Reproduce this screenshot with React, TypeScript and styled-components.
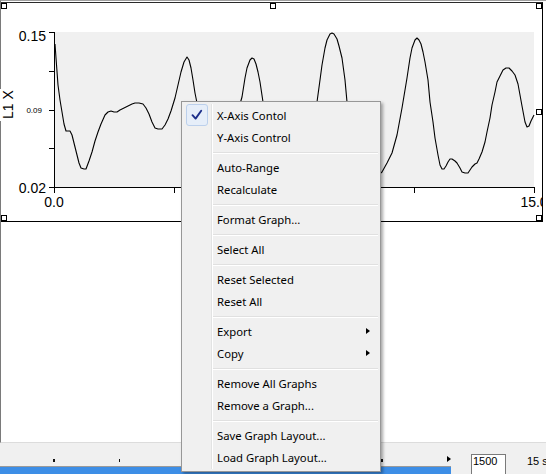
import styled, { createGlobalStyle, css } from 'styled-components';

const GlobalStyle = createGlobalStyle`
  html, body {
    margin: 0;
    padding: 0;
    background: #fff;
  }
  body {
    font-family: 'Liberation Sans', Arial, sans-serif;
  }
`;

const Window = styled.div`
  position: relative;
  width: 546px;
  height: 474px;
  overflow: hidden;
  background: #f0f0f0;
  display: flex;
  flex-direction: column;
`;

const Canvas = styled.div`
  flex: none;
  box-sizing: border-box;
  height: 443px;
  padding-top: 1px;
  background: #fff;
  border-top: 1px solid #a0a0a0;
  border-left: 1px solid #7a7a7a;
  border-bottom: 1px solid #dcdcdc;
`;

const Frame = styled.div`
  position: relative;
  box-sizing: border-box;
  width: 542px;
  height: 220px;
  border-top: 1px solid #2a2a2a;
  border-right: 1px solid #000;
  border-bottom: 1px solid #000;
`;

const Chart = styled.svg`
  display: block;
  font-family: 'Liberation Sans', Arial, sans-serif;
`;

const Handle = styled.span<{ $x: 'left' | 'center' | 'right'; $y: 'top' | 'middle' | 'bottom' }>`
  position: absolute;
  width: 6px;
  height: 6px;
  box-sizing: border-box;
  border: 1px solid #000;
  background: #fff;
  ${p => (p.$x === 'left' ? 'left: 0;' : p.$x === 'right' ? 'right: 0;' : 'left: 269px;')}
  ${p => (p.$y === 'top' ? 'top: 0;' : p.$y === 'bottom' ? 'bottom: 0;' : 'top: 106px;')}
`;

const AxisTitle = styled.div`
  position: absolute;
  left: -1px;
  top: 86px;
  width: 16px;
  height: 32px;
  background: #fff;
  display: flex;
  align-items: center;
  justify-content: center;
  writing-mode: vertical-rl;
  transform: rotate(180deg);
  font-size: 14px;
  line-height: 16px;
  color: #000;
`;

const BottomBar = styled.div`
  flex: 1;
  display: flex;
  align-items: flex-start;
  background: #f0f0f0;
`;

const Track = styled.div`
  width: 451px;
  height: 100%;
  display: flex;
  flex-direction: column;
`;

const Ruler = styled.div`
  height: 23px;
  box-sizing: border-box;
  display: flex;
  align-items: flex-end;
  padding: 0 0 4px 53px;
`;

const Tick = styled.span`
  width: 2px;
  height: 3px;
  margin-right: 64px;
  background: #111;
`;

const EndArrow = styled.span`
  margin-left: auto;
  border-left: 4px solid #000;
  border-top: 3px solid transparent;
  border-bottom: 3px solid transparent;
`;

const Progress = styled.div`
  flex: 1;
  border-top: 1px solid #9a9a9a;
  background: #3d8ee6;
`;

const ValueBox = styled.input`
  margin: 11px 0 0 20px;
  width: 35px;
  height: 22px;
  box-sizing: border-box;
  padding: 0 0 8px 1px;
  border: 1px solid #7a7a7a;
  background: #fff;
  font-family: 'Liberation Sans', Arial, sans-serif;
  font-size: 11px;
  line-height: 12px;
  color: #000;
  outline: none;
`;

const Unit = styled.span`
  margin: 12px 0 0 21px;
  font-size: 11px;
  line-height: 12px;
  white-space: nowrap;
  color: #000;
`;

const Menu = styled.div`
  position: absolute;
  left: 181px;
  top: 101px;
  width: 200px;
  box-sizing: border-box;
  padding: 2px 2px 3px;
  background: #f0f0f0;
  border: 1px solid #979797;
  box-shadow: 2px 2px 3px rgba(0, 0, 0, 0.35);
  font-family: 'Segoe UI', 'Noto Sans', sans-serif;
  font-size: 11.3px;
  color: #000;

  &::before {
    content: '';
    position: absolute;
    top: 2px;
    bottom: 2px;
    left: 29px;
    width: 1px;
    background: #e2e3e3;
    box-shadow: 1px 0 0 #fff;
  }
`;

const Item = styled.div`
  position: relative;
  display: flex;
  align-items: center;
  height: 22px;
  padding-left: 2px;
`;

const CheckCell = styled.span<{ $on?: boolean }>`
  width: 22px;
  height: 22px;
  box-sizing: border-box;
  display: flex;
  align-items: center;
  justify-content: center;
  border-radius: 3px;
  ${p =>
    p.$on &&
    css`
      background: #e6eef9;
      border: 1px solid #bcd0ec;
    `}
`;

const Label = styled.span`
  margin-left: 9px;
  white-space: nowrap;
`;

const SubArrow = styled.span`
  margin-left: auto;
  margin-right: 8px;
  border-left: 4px solid #000;
  border-top: 3.5px solid transparent;
  border-bottom: 3.5px solid transparent;
`;

const Separator = styled.div`
  height: 1px;
  margin: 4px 0 2px 29px;
  background: #e0e0e0;
  border-bottom: 1px solid #fff;
`;

const wave: [number, number][] = [
  [55, 44], [56, 58], [58, 85], [60, 100], [62, 112], [64, 124], [66, 131], [68, 131], [70, 131],
  [72, 135], [74, 143], [77, 155], [79, 163], [81, 168], [84, 169], [86, 169], [89, 161], [92, 152],
  [95, 141], [98, 132], [101, 124], [105, 115], [108, 112], [111, 111], [114, 112], [117, 112],
  [120, 110], [124, 108], [128, 106], [132, 104], [135, 103], [139, 103], [143, 104], [146, 108],
  [149, 114], [152, 122], [155, 128], [158, 129], [162, 129], [165, 125], [168, 119], [171, 111],
  [175, 98], [178, 85], [181, 72], [184, 62], [187, 57], [189, 60], [191, 68], [193, 80], [195, 93],
  [197, 103], [200, 118], [204, 135], [208, 148], [214, 155], [220, 150], [228, 140], [235, 120],
  [240, 104], [242, 97], [245, 78], [247, 68], [250, 60], [252, 58], [254, 59], [256, 64], [258, 72],
  [260, 82], [263, 102], [267, 125], [272, 145], [280, 160], [290, 165], [300, 150], [308, 130],
  [313, 115], [317, 102], [320, 80], [322, 65], [325, 48], [327, 40], [330, 34], [332, 33], [334, 34],
  [337, 39], [339, 46], [342, 58], [345, 80], [347, 102], [350, 125], [355, 150], [362, 168],
  [370, 175], [377, 176], [382, 172], [387, 163], [392, 153], [397, 135], [402, 108], [407, 78],
  [410, 58], [412, 48], [415, 40], [417, 38], [419, 40], [421, 44], [423, 52], [425, 62], [428, 80],
  [430, 102], [433, 122], [435, 138], [438, 155], [440, 165], [442, 169], [444, 169], [446, 166],
  [448, 162], [450, 159], [452, 159], [455, 161], [457, 163], [460, 168], [462, 172], [465, 173],
  [468, 173], [470, 170], [472, 167], [475, 164], [477, 163], [479, 159], [482, 152], [485, 142],
  [487, 132], [490, 118], [492, 105], [495, 92], [497, 82], [500, 76], [503, 70], [506, 68],
  [509, 68], [512, 71], [515, 75], [518, 84], [520, 95], [522, 106], [525, 122], [527, 127],
  [529, 126], [531, 121], [533, 117], [534, 115],
];

const yTicks = [32.5, 71.5, 110.5, 148.5, 187.5];
const xTicks = [54.5, 174.5, 294.5, 414.5, 534.5];

type Entry = { label: string; checked?: boolean; sub?: boolean } | 'sep';

const menu: Entry[] = [
  { label: 'X-Axis Contol', checked: true },
  { label: 'Y-Axis Control' },
  'sep',
  { label: 'Auto-Range' },
  { label: 'Recalculate' },
  'sep',
  { label: 'Format Graph...' },
  'sep',
  { label: 'Select All' },
  'sep',
  { label: 'Reset Selected' },
  { label: 'Reset All' },
  'sep',
  { label: 'Export', sub: true },
  { label: 'Copy', sub: true },
  'sep',
  { label: 'Remove All Graphs' },
  { label: 'Remove a Graph...' },
  'sep',
  { label: 'Save Graph Layout...' },
  { label: 'Load Graph Layout...' },
];

const GraphPlot = () => (
  <Chart width={541} height={218} viewBox="1 3 541 218">
    <rect x={54} y={32} width={480} height={155} fill="#f0f0f0" />
    <g stroke="#000" strokeWidth={1} shapeRendering="crispEdges">
      <line x1={54.5} y1={32} x2={54.5} y2={188} />
      <line x1={49} y1={187.5} x2={535} y2={187.5} />
      {yTicks.map(y => (
        <line key={y} x1={49} y1={y} x2={54} y2={y} />
      ))}
      {xTicks.map(x => (
        <line key={x} x1={x} y1={188} x2={x} y2={193} />
      ))}
    </g>
    <polyline
      points={wave.map(p => p.join(',')).join(' ')}
      fill="none"
      stroke="#000"
      strokeWidth={1.1}
      strokeLinejoin="round"
    />
    <g fill="#000" fontSize={14}>
      <text x={46} y={41} textAnchor="end">0.15</text>
      <text x={46} y={193} textAnchor="end">0.02</text>
      <text x={54} y={207} textAnchor="middle">0.0</text>
      <text x={534} y={207} textAnchor="middle">15.0</text>
    </g>
    <text x={42} y={113} textAnchor="end" fontSize={8} fill="#000">0.09</text>
  </Chart>
);

const CheckMark = () => (
  <svg width={12} height={12} viewBox="0 0 12 12">
    <path d="M1.5 6.2 L4.6 9.6 L10.2 1.8" fill="none" stroke="#1d2f8a" strokeWidth={1.9} strokeLinecap="round" strokeLinejoin="round" />
  </svg>
);

const App = () => (
  <>
    <GlobalStyle />
    <Window>
      <Canvas>
        <Frame>
          <GraphPlot />
          <Handle $x="left" $y="top" />
          <Handle $x="center" $y="top" />
          <Handle $x="right" $y="top" />
          <Handle $x="right" $y="middle" />
          <Handle $x="left" $y="bottom" />
          <Handle $x="center" $y="bottom" />
          <Handle $x="right" $y="bottom" />
          <AxisTitle>L1 X</AxisTitle>
        </Frame>
      </Canvas>
      <BottomBar>
        <Track>
          <Ruler>
            {[0, 1, 2, 3, 4, 5].map(i => (
              <Tick key={i} />
            ))}
            <EndArrow />
          </Ruler>
          <Progress />
        </Track>
        <ValueBox readOnly value="1500" />
        <Unit>15 sec</Unit>
      </BottomBar>
      <Menu>
        {menu.map((m, i) =>
          m === 'sep' ? (
            <Separator key={i} />
          ) : (
            <Item key={i}>
              <CheckCell $on={m.checked}>{m.checked && <CheckMark />}</CheckCell>
              <Label>{m.label}</Label>
              {m.sub && <SubArrow />}
            </Item>
          )
        )}
      </Menu>
    </Window>
  </>
);

export default App;
